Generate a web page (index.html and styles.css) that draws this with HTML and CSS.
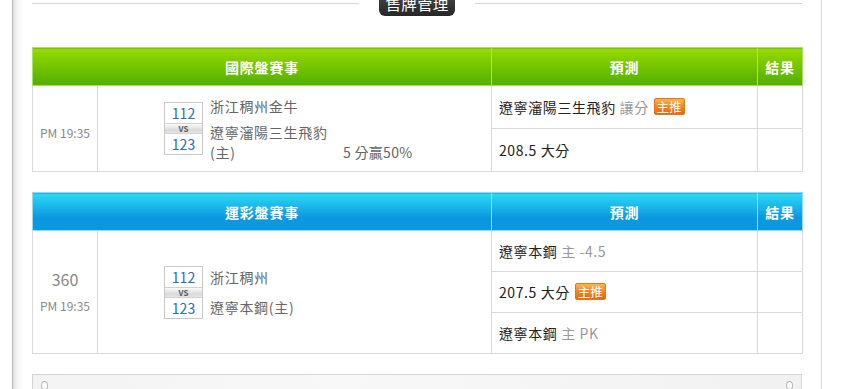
FILE: index.html
```html
<!DOCTYPE html>
<html lang="zh-Hant">
<head>
<meta charset="utf-8">
<title>售牌管理</title>
<link rel="stylesheet" href="styles.css">
</head>
<body>
<div class="frame">
  <div class="title-row">
    <div class="title-line"></div>
    <div class="title-badge">售牌管理</div>
    <div class="title-line"></div>
  </div>

  <table class="tbl green">
    <colgroup><col class="c-time"><col class="c-match"><col class="c-pred"><col class="c-res"></colgroup>
    <thead>
      <tr><th colspan="2">國際盤賽事</th><th>預測</th><th>結果</th></tr>
    </thead>
    <tbody>
      <tr class="row1">
        <td rowspan="2" class="time time-1"><div class="clock">PM 19:35</div></td>
        <td rowspan="2" class="match">
          <div class="match-inner">
            <div class="score"><div class="s-num">112</div><div class="vs">VS</div><div class="s-num">123</div></div>
            <div class="teams teams-1"><div class="team">浙江稠州金牛</div><div class="team">遼寧瀋陽三生飛豹(主)</div></div>
            <div class="handicap">5 分贏50%</div>
          </div>
        </td>
        <td class="pred">遼寧瀋陽三生飛豹 <span class="muted">讓分</span> <span class="tag">主推</span></td>
        <td class="res"></td>
      </tr>
      <tr class="row1">
        <td class="pred">208.5 大分</td>
        <td class="res"></td>
      </tr>
    </tbody>
  </table>

  <table class="tbl blue">
    <colgroup><col class="c-time"><col class="c-match"><col class="c-pred"><col class="c-res"></colgroup>
    <thead>
      <tr><th colspan="2">運彩盤賽事</th><th>預測</th><th>結果</th></tr>
    </thead>
    <tbody>
      <tr class="row2">
        <td rowspan="3" class="time"><div class="game-no">360</div><div class="clock">PM 19:35</div></td>
        <td rowspan="3" class="match">
          <div class="match-inner">
            <div class="score"><div class="s-num">112</div><div class="vs">VS</div><div class="s-num">123</div></div>
            <div class="teams teams-2"><div class="team">浙江稠州</div><div class="team">遼寧本鋼(主)</div></div>
          </div>
        </td>
        <td class="pred">遼寧本鋼 <span class="muted">主 -4.5</span></td>
        <td class="res"></td>
      </tr>
      <tr class="row2">
        <td class="pred">207.5 大分 <span class="tag">主推</span></td>
        <td class="res"></td>
      </tr>
      <tr class="row2">
        <td class="pred">遼寧本鋼 <span class="muted">主 PK</span></td>
        <td class="res"></td>
      </tr>
    </tbody>
  </table>

  <div class="panel"></div>
</div>
</body>
</html>
```

FILE: styles.css
```css
html, body {
  margin: 0;
  padding: 0;
  background: #fff;
}

body {
  font-family: "Noto Sans CJK TC", "Noto Sans", sans-serif;
  color: #222;
  overflow: hidden;
}

.frame {
  margin-left: 12px;
  width: 770px;
  padding: 0 19px;
  min-height: 400px;
  border-left: 1px solid #b9b9b9;
  border-right: 1px solid #dcdcdc;
  background: linear-gradient(to right, #dedede 0, #f3f3f3 4px, #fff 10px);
}

/* title */
.title-row {
  display: flex;
  align-items: flex-start;
  height: 16px;
}

.title-line {
  flex: 1;
  height: 1px;
  margin-top: 3px;
  background: #d6d6d6;
}

.title-badge {
  flex: none;
  width: 76px;
  height: 25px;
  margin: -9px 20px 0;
  border-radius: 0 0 6px 6px;
  background: linear-gradient(#4a4a4a, #262626);
  color: #fff;
  font-size: 15.5px;
  line-height: 24px;
  text-align: center;
  letter-spacing: 0.3px;
}

/* tables */
.tbl {
  width: 770px;
  table-layout: fixed;
  border-collapse: collapse;
  margin-top: 31px;
}

.tbl.blue {
  margin-top: 20px;
}

.c-time { width: 65px; }
.c-match { width: 394px; }
.c-pred { width: 266px; }
.c-res { width: 45px; }

.tbl th {
  height: 37px;
  padding: 0;
  border: 1px solid;
  color: #fff;
  font-size: 14px;
  font-weight: bold;
  letter-spacing: 0.8px;
  text-align: center;
}

.green th {
  background: linear-gradient(#97da00, #52ae00);
  border-color: #a7e35e;
}

.blue th {
  background: linear-gradient(#2cdaf3, #0b98e1 65%, #0a97e0);
  border-color: #92dcf1;
}

.tbl td {
  border: 1px solid #d9d9d9;
  padding: 0;
  vertical-align: middle;
}

.row1 td { height: 42px; }
.row2 td { height: 40px; }

.time {
  text-align: center;
  color: #888;
}

.time-1 {
  padding-top: 9px !important;
}

.clock {
  font-size: 12px;
  line-height: 20px;
}

.game-no {
  font-size: 16px;
  line-height: 22px;
  margin-bottom: 6px;
}

.match {
  padding-left: 66px !important;
}

.match-inner {
  display: flex;
  align-items: center;
}

.score {
  flex: none;
  width: 37px;
  border: 1px solid #c9c9c9;
  text-align: center;
  background: #fff;
}

.s-num {
  height: 20px;
  line-height: 20px;
  font-size: 14px;
  color: #2c6eb0;
}

.vs {
  height: 9px;
  line-height: 9px;
  font-size: 8px;
  font-weight: bold;
  color: #5a5a5a;
  border-top: 1px solid #d2d2d2;
  border-bottom: 1px solid #d2d2d2;
  background: linear-gradient(#fbfbfb, #d9d9d9 70%, #e6e6e6);
}

.teams {
  flex: none;
  width: 126px;
  margin-left: 7px;
  display: flex;
  flex-direction: column;
}

.teams-1 { gap: 6px; }
.teams-2 { gap: 10px; }

.team {
  font-size: 14px;
  line-height: 20px;
  letter-spacing: 0.7px;
  color: #666;
}

.handicap {
  align-self: flex-end;
  margin-left: 7px;
  font-size: 14px;
  line-height: 20px;
  letter-spacing: 0.3px;
  color: #666;
  white-space: nowrap;
}

.pred {
  padding-left: 7px !important;
  font-size: 14px;
  letter-spacing: 0.6px;
  color: #222;
  white-space: nowrap;
}

.muted {
  color: #999;
}

.tag {
  display: inline-block;
  margin-left: 1px;
  padding: 0 2px;
  border: 1px solid #e2761c;
  border-radius: 2px;
  background: linear-gradient(#fcb452, #f0801e 55%, #e86a10);
  color: #fff;
  font-size: 12.5px;
  line-height: 15px;
  letter-spacing: 0;
  vertical-align: 1px;
}

/* bottom panel */
.panel {
  position: relative;
  height: 40px;
  margin-top: 20px;
  border: 1px solid #d5d5d5;
  background: linear-gradient(to right, #f3f3f3, #f8f8f8 40%, #f1f1f1);
}

.panel::before,
.panel::after {
  content: "";
  position: absolute;
  top: 6px;
  width: 5px;
  height: 7px;
  border: 1px solid #b5b5b5;
  border-radius: 50%;
  background: #fff;
}

.panel::before { left: 8px; }
.panel::after { right: 8px; }
```
